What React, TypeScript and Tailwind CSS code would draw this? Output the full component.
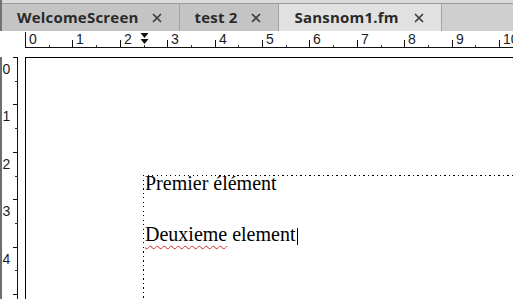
import { Fragment } from 'react';

const UNIT = 47.4;

type Tab = { name: string; active?: boolean };

const tabs: Tab[] = [
  { name: 'WelcomeScreen' },
  { name: 'test 2' },
  { name: 'Sansnom1.fm', active: true },
];

function CloseIcon() {
  return (
    <svg width="10" height="10" viewBox="0 0 10 10" className="shrink-0">
      <path d="M1 1 L9 9 M9 1 L1 9" stroke="#3d3d3d" strokeWidth="1.7" />
    </svg>
  );
}

function TabBar() {
  return (
    <div className="flex h-[31px] shrink-0 border-l-2 border-[#727272] bg-[#dadada] pt-[3px]">
      <div className="flex flex-1 border-t border-[#9c9c9c]">
        {tabs.map((tab) => (
          <div
            key={tab.name}
            className={
              tab.active
                ? 'flex items-center gap-[15px] border-r border-[#a3a3a3] bg-[#e1e1e1] pl-[16px] pr-[17px]'
                : 'flex items-center gap-[13px] border-r border-[#a3a3a3] bg-[#c4c4c4] pl-[15px] pr-[17px]'
            }
          >
            <span className="text-[15px] font-bold tracking-[0.2px] text-[#2a2a2a] [font-family:'Open_Sans',sans-serif]">
              {tab.name}
            </span>
            <CloseIcon />
          </div>
        ))}
        <div className="flex-1 bg-[#cfcfcf]" />
      </div>
    </div>
  );
}

// horizontal ruler, y offset 31
function TopRuler() {
  const majors = Array.from({ length: 11 }, (_, i) => i);
  return (
    <div className="h-[26px] shrink-0 bg-white">
      <svg width="513" height="26" className="block">
        <line x1="25.5" y1="1" x2="25.5" y2="16" stroke="#111" />
        <line x1="25" y1="16.5" x2="513" y2="16.5" stroke="#111" />
        {majors.map((i) => {
          const x = Math.round(25 + i * UNIT) + 0.5;
          const hx = Math.round(25 + (i + 0.5) * UNIT) + 0.5;
          return (
            <Fragment key={i}>
              {i > 0 && <line x1={x} y1="9" x2={x} y2="16" stroke="#111" />}
              <line x1={hx} y1="14" x2={hx} y2="16" stroke="#333" />
              <text
                x={x + 3.5}
                y="13"
                fontSize="14"
                fill="#1c1c1c"
                fontFamily="'Liberation Sans', Arial, sans-serif"
              >
                {i}
              </text>
            </Fragment>
          );
        })}
        {/* indent markers */}
        <polygon points="140.5,2 148.5,2 144.5,7" fill="#111" />
        <polygon points="140.5,8 148.5,8 144.5,13" fill="#111" />
      </svg>
    </div>
  );
}

// vertical ruler, y offset 57
function SideRuler() {
  const majors = Array.from({ length: 6 }, (_, i) => i);
  return (
    <div className="w-[25px] shrink-0 border-l-2 border-[#6e6e6e] bg-white">
      <svg width="23" height="242" className="block">
        <line x1="15.5" y1="0" x2="15.5" y2="242" stroke="#111" />
        {majors.map((i) => {
          const y = Math.round(i * UNIT) + 0.5;
          const hy = Math.round((i + 0.5) * UNIT) + 0.5;
          return (
            <Fragment key={i}>
              <line x1="11" y1={y} x2="16" y2={y} stroke="#111" />
              <line x1="13" y1={hy} x2="16" y2={hy} stroke="#333" />
              {i < 5 && (
                <text
                  x="0.5"
                  y={y + 16}
                  fontSize="14"
                  fill="#1c1c1c"
                  fontFamily="'Liberation Sans', Arial, sans-serif"
                >
                  {i}
                </text>
              )}
            </Fragment>
          );
        })}
      </svg>
    </div>
  );
}

export default function App() {
  return (
    <div className="flex h-[299px] w-[513px] flex-col overflow-hidden bg-white">
      <TabBar />
      <TopRuler />
      <div className="flex min-h-0 flex-1">
        <SideRuler />
        {/* page */}
        <div className="flex-1 border-l border-t border-black bg-white pl-[117px] pt-[117px]">
          <div className="h-full bg-[repeating-linear-gradient(to_right,#000_0_1px,transparent_1px_4.5px),repeating-linear-gradient(to_bottom,#000_0_1px,transparent_1px_4.5px)] bg-[length:100%_1px,1px_100%] bg-no-repeat pl-[2px] text-[20px] leading-[17px] text-black [font-family:'Liberation_Serif','Times_New_Roman',serif]">
            <p>Premier élément</p>
            <p className="mt-[34px] whitespace-nowrap">
              <span className="underline decoration-[#d42a2a] decoration-wavy decoration-1 underline-offset-[4px]">
                Deuxieme
              </span>{' '}
              element
              <span className="ml-px inline-block h-[17px] w-px bg-black align-[-4px]" />
            </p>
          </div>
        </div>
      </div>
    </div>
  );
}
